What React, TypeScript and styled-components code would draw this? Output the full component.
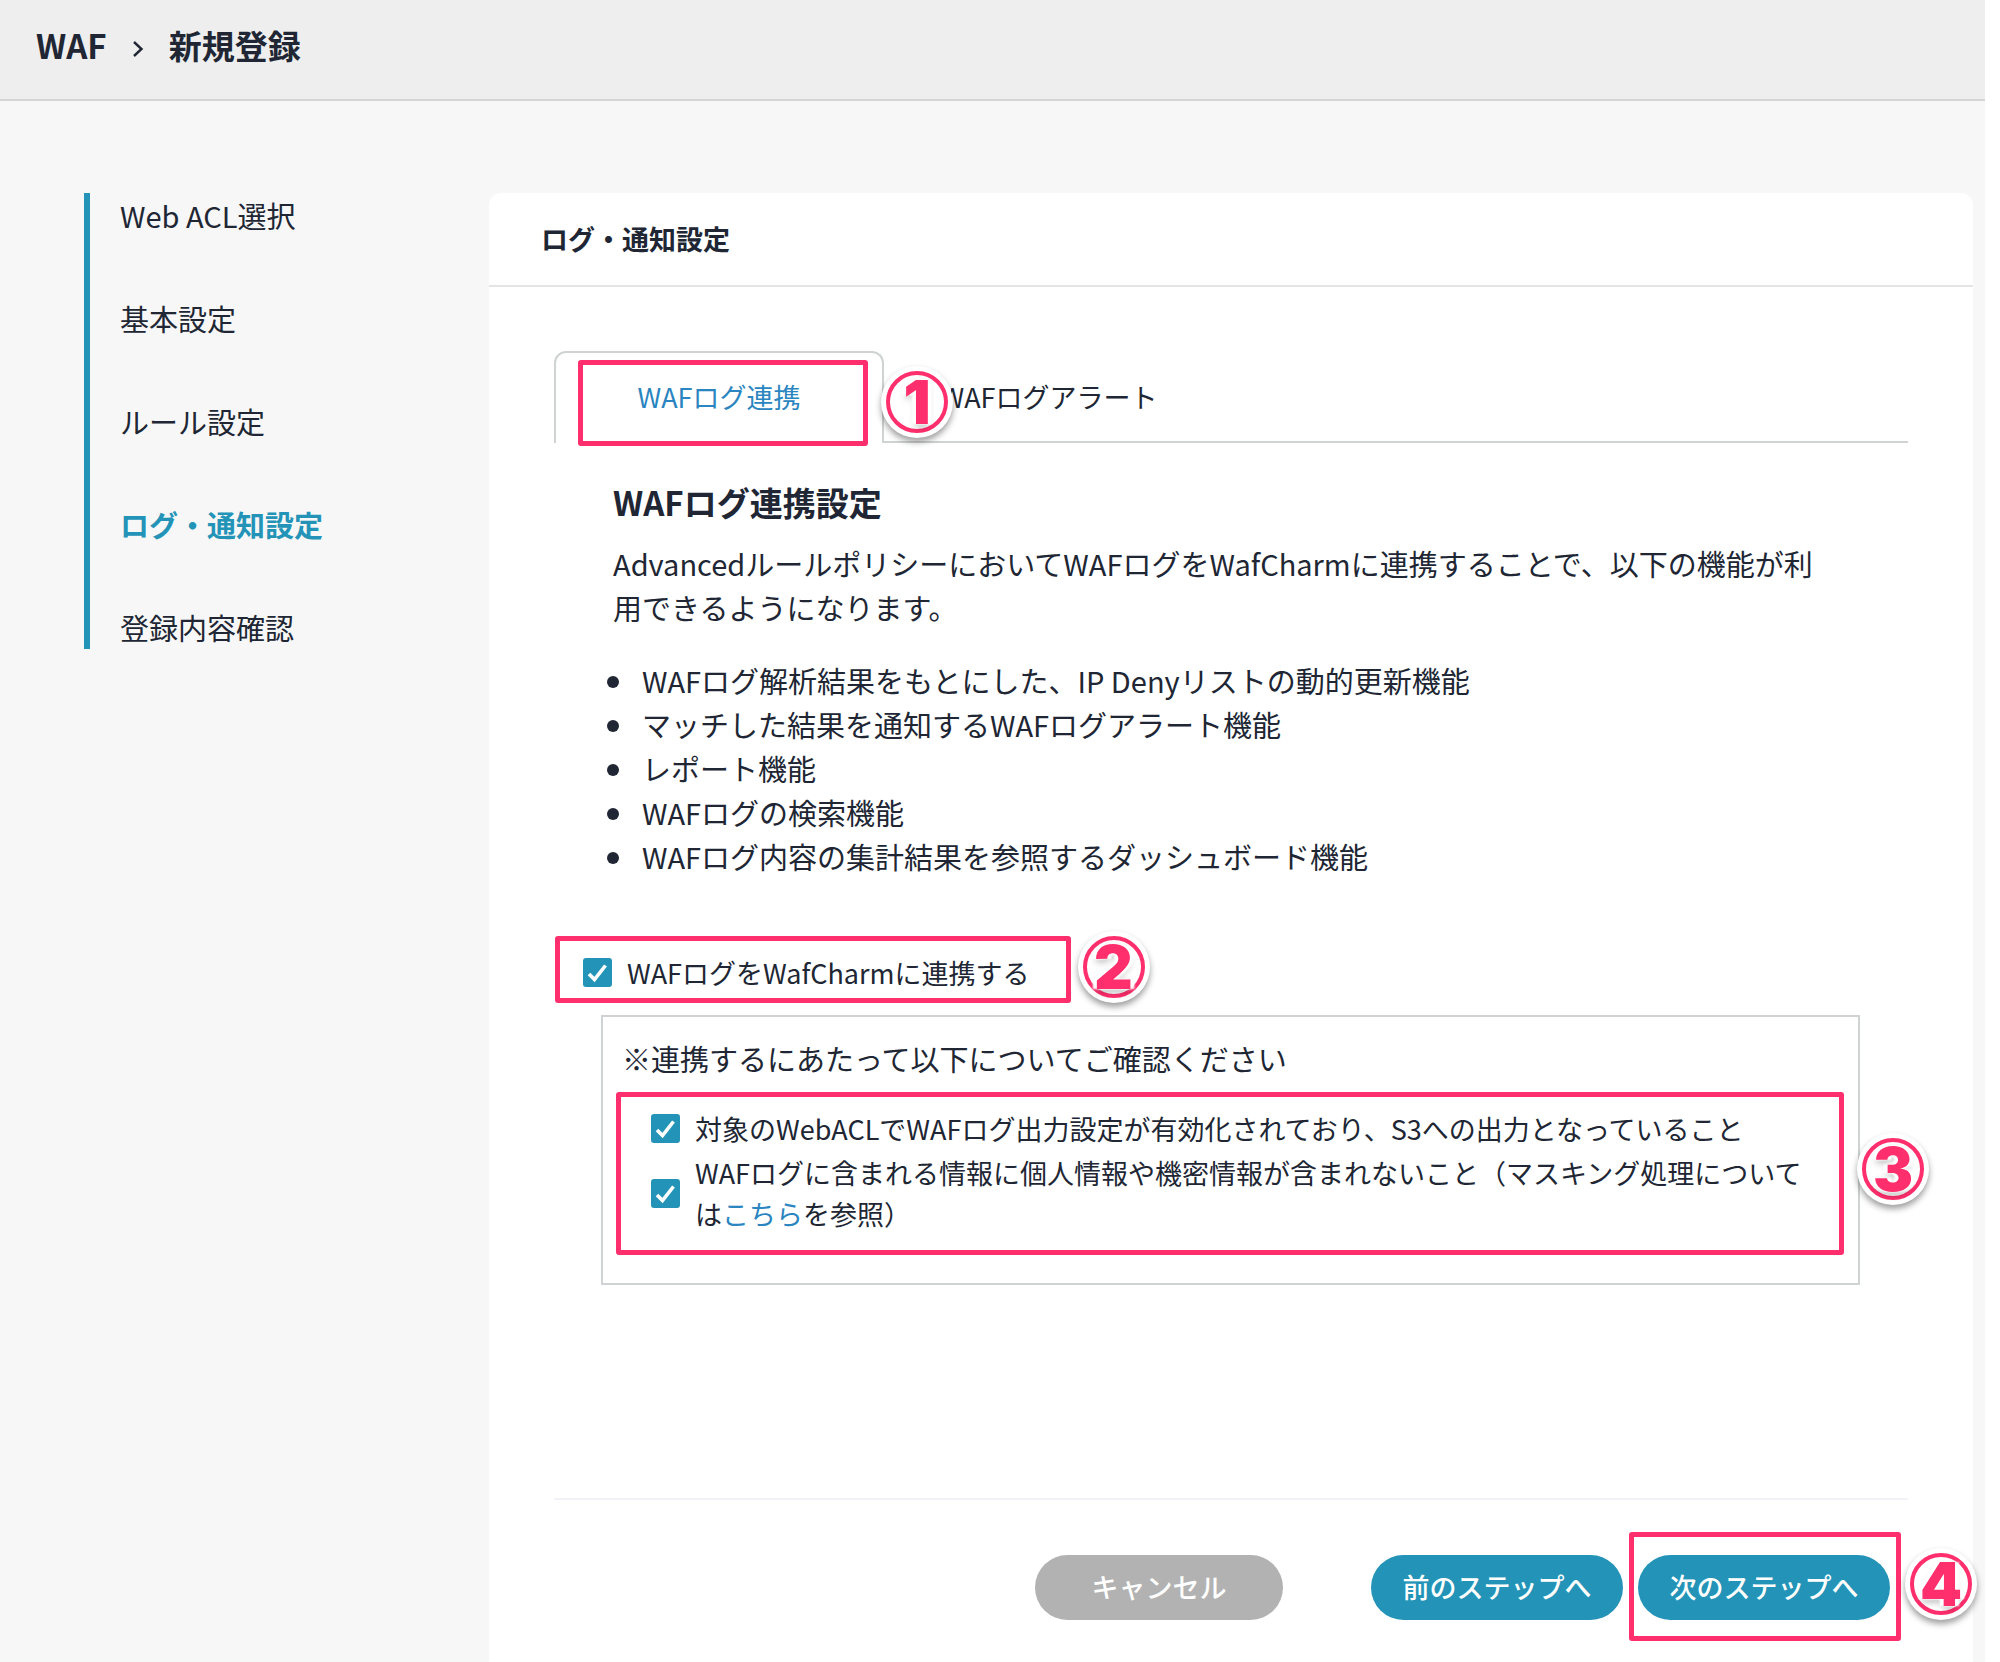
import React, { useId, useState } from "react";
import styled, { createGlobalStyle, css } from "styled-components";

const color = {
  ink: "#202633",
  teal: "#2394b8",
  link: "#2a85c0",
  mark: "#ff2e6c",
  line: "#d0d3d3",
  page: "#f7f7f7",
};

const GlobalStyle = createGlobalStyle`
  *, *::before, *::after { box-sizing: border-box; }
  body {
    margin: 0;
    background: #fff;
    color: ${color.ink};
    font-family: "Noto Sans CJK JP", "Noto Sans", sans-serif;
    font-size: 29px;
    line-height: 44px;
  }
  h1, h2, h3, p, ul, ol { margin: 0; padding: 0; }
  button, input { font: inherit; color: inherit; }
  a { text-decoration: none; }
`;

const Page = styled.div`
  display: flex;
  flex-direction: column;
  min-height: 100vh;
  margin-right: 15px;
  background: ${color.page};
`;

const TopBar = styled.header`
  display: flex;
  align-items: center;
  height: 101px;
  padding: 0 36px 10px;
  background: #eeeeee;
  border-bottom: 2px solid #d3d6d5;
  font-size: 33px;
  font-weight: 700;
`;

const Crumbs = styled.nav`
  display: flex;
  align-items: center;
  gap: 25px;
`;

const CrumbLink = styled.a`
  color: inherit;
`;

const CrumbArrow = styled.svg`
  width: 12px;
  height: 18px;
  margin-top: 8px;
`;

const CrumbTitle = styled.h1`
  font-size: inherit;
  font-weight: inherit;
`;

const Body = styled.div`
  display: grid;
  grid-template-columns: 405px minmax(0, 1fr);
  align-items: stretch;
  flex: 1;
  padding: 92px 12px 0 84px;
`;

const Steps = styled.ol`
  display: flex;
  flex-direction: column;
  gap: 59px;
  align-self: start;
  padding-left: 30px;
  border-left: 6px solid ${color.teal};
  list-style: none;
`;

const Step = styled.li<{ $current?: boolean }>`
  ${(p) =>
    p.$current &&
    css`
      color: ${color.teal};
      font-weight: 700;
    `}
`;

const Panel = styled.main`
  display: flex;
  flex-direction: column;
  background: #fff;
  border-radius: 12px 12px 0 0;
`;

const PanelHead = styled.div`
  padding: 24px 52px;
  border-bottom: 2px solid #e3e5e5;
`;

const PanelTitle = styled.h2`
  font-size: 27px;
  font-weight: 700;
`;

const PanelBody = styled.div`
  display: flex;
  flex-direction: column;
  flex: 1;
  padding: 64px 65px 42px;
`;

const Tabs = styled.div`
  display: flex;
`;

const TabCell = styled.div`
  position: relative;
  display: flex;
`;

const Tab = styled.button<{ $active?: boolean }>`
  min-width: 330px;
  height: 92px;
  padding: 2px 0 0;
  background: none;
  font-size: 27px;
  cursor: pointer;
  border: 0 solid ${color.line};
  border-bottom-width: 2px;
  ${(p) =>
    p.$active &&
    css`
      padding: 0 0 2px;
      color: ${color.link};
      border-width: 2px 2px 0;
      border-radius: 12px 12px 0 0;
    `}
`;

const TabFill = styled.div`
  flex: 1;
  border-bottom: 2px solid ${color.line};
`;

const Intro = styled.section`
  padding: 37px 72px 0 59px;
`;

const SectionTitle = styled.h3`
  margin-bottom: 17px;
  font-size: 33px;
  font-weight: 700;
`;

const Features = styled.ul`
  margin: 29px 0 0 -6px;
  list-style: none;
`;

const Feature = styled.li`
  display: flex;
  align-items: center;
  gap: 23px;
  &::before {
    content: "";
    flex: none;
    width: 12px;
    height: 12px;
    margin-top: 4px;
    border-radius: 50%;
    background: ${color.ink};
  }
`;

const ConsentRow = styled.div`
  position: relative;
  align-self: flex-start;
  display: flex;
  margin-top: 57px;
  padding: 17px 36px 10px 29px;
`;

const CheckLabel = styled.label`
  display: flex;
  align-items: center;
  gap: 15px;
  font-size: 27px;
  line-height: 41px;
`;

const TickBox = styled.span`
  display: grid;
  flex: none;
  width: 29px;
  height: 29px;
  & > * {
    grid-area: 1 / 1;
  }
`;

const TickInput = styled.input`
  appearance: none;
  width: 29px;
  height: 29px;
  margin: 0;
  background: #fff;
  border: 2px solid #b5b8ba;
  border-radius: 3px;
  cursor: pointer;
  &:checked {
    background: ${color.teal};
    border-color: ${color.teal};
  }
`;

const TickMark = styled.svg`
  width: 29px;
  height: 29px;
  pointer-events: none;
`;

const NoteBox = styled.section`
  margin: 12px 48px 0 47px;
  padding: 19px 14px 28px 13px;
  border: 2px solid ${color.line};
`;

const NoteText = styled.p`
  padding-left: 6px;
`;

const Conditions = styled.ul`
  position: relative;
  display: flex;
  flex-direction: column;
  gap: 3px;
  margin-top: 12px;
  padding: 16px 34px 21px 35px;
  list-style: none;
`;

const InlineLink = styled.a`
  color: ${color.link};
`;

const Footer = styled.footer`
  display: flex;
  align-items: center;
  justify-content: flex-end;
  margin-top: auto;
  padding: 55px 18px 0;
  border-top: 2px solid #f1f3f9;
`;

const Pill = styled.button<{ $muted?: boolean }>`
  width: ${(p) => (p.$muted ? "248px" : "252px")};
  height: 65px;
  margin-right: ${(p) => (p.$muted ? "88px" : "0")};
  padding: 0 0 2px;
  border: 0;
  border-radius: 33px;
  background: ${(p) => (p.$muted ? "#b2b2b2" : color.teal)};
  color: #fff;
  font-size: 27px;
  font-weight: 500;
  cursor: pointer;
`;

const NextCell = styled.div`
  position: relative;
  display: flex;
  margin-left: 15px;
`;

const Frame = styled.div<{ $inset: string }>`
  position: absolute;
  inset: ${(p) => p.$inset};
  border: 5px solid ${color.mark};
  border-radius: 3px;
  pointer-events: none;
`;

const Badge = styled.span<{ $top: number; $right: number }>`
  position: absolute;
  z-index: 1;
  top: ${(p) => p.$top}px;
  right: ${(p) => -p.$right}px;
  display: flex;
  align-items: center;
  justify-content: center;
  width: 62px;
  height: 62px;
  border: 4px solid ${color.mark};
  border-radius: 50%;
  background: #fff;
  box-shadow: 0 0 0 5px #fff, 0 4px 6px 5px rgba(0, 0, 0, 0.38);
  color: ${color.mark};
  font-family: Inter, sans-serif;
  font-size: 60px;
  font-weight: 900;
  line-height: 54px;
  text-shadow: 0 0 3px #fff, 4px 0 2px #fff, -4px 0 2px #fff,
    0 3px 7px rgba(0, 0, 0, 0.3);
  pointer-events: none;
`;

function Check({ children }: { children: React.ReactNode }) {
  const id = useId();
  const [on, setOn] = useState(true);
  return (
    <CheckLabel htmlFor={id}>
      <TickBox>
        <TickInput id={id} type="checkbox" checked={on} onChange={(e) => setOn(e.target.checked)} />
        {on && (
          <TickMark viewBox="0 0 29 29" aria-hidden="true">
            <path d="M6 16 L11.5 21.5 L22.5 7.5" fill="none" stroke="#fff" strokeWidth="3.6" />
          </TickMark>
        )}
      </TickBox>
      <span>{children}</span>
    </CheckLabel>
  );
}

const steps = ["Web ACL選択", "基本設定", "ルール設定", "ログ・通知設定", "登録内容確認"];

const features = [
  "WAFログ解析結果をもとにした、IP Denyリストの動的更新機能",
  "マッチした結果を通知するWAFログアラート機能",
  "レポート機能",
  "WAFログの検索機能",
  "WAFログ内容の集計結果を参照するダッシュボード機能",
];

export default function App() {
  return (
    <Page lang="ja">
      <GlobalStyle />
      <TopBar>
        <Crumbs>
          <CrumbLink href="#waf">WAF</CrumbLink>
          <CrumbArrow viewBox="0 0 12 18" aria-hidden="true">
            <path d="M2 2 L9.5 9 L2 16" fill="none" stroke={color.ink} strokeWidth="2.4" />
          </CrumbArrow>
          <CrumbTitle>新規登録</CrumbTitle>
        </Crumbs>
      </TopBar>
      <Body>
        <Steps>
          {steps.map((s) => (
            <Step key={s} $current={s === "ログ・通知設定"}>
              {s}
            </Step>
          ))}
        </Steps>
        <Panel>
          <PanelHead>
            <PanelTitle>ログ・通知設定</PanelTitle>
          </PanelHead>
          <PanelBody>
            <Tabs role="tablist">
              <TabCell>
                <Tab role="tab" aria-selected="true" $active>
                  WAFログ連携
                </Tab>
                <Frame $inset="9px 16px -3px 24px" />
                <Badge $top={20} $right={64}>1</Badge>
              </TabCell>
              <Tab role="tab" aria-selected="false">
                WAFログアラート
              </Tab>
              <TabFill />
            </Tabs>
            <Intro>
              <SectionTitle>WAFログ連携設定</SectionTitle>
              <p>
                AdvancedルールポリシーにおいてWAFログをWafCharmに連携することで、以下の機能が利用できるようになります。
              </p>
              <Features>
                {features.map((f) => (
                  <Feature key={f}>{f}</Feature>
                ))}
              </Features>
            </Intro>
            <ConsentRow>
              <Check>WAFログをWafCharmに連携する</Check>
              <Frame $inset="1px -5px 0 1px" />
              <Badge $top={1} $right={79}>2</Badge>
            </ConsentRow>
            <NoteBox>
              <NoteText>※連携するにあたって以下についてご確認ください</NoteText>
              <Conditions>
                <li>
                  <Check>対象のWebACLでWAFログ出力設定が有効化されており、S3への出力となっていること</Check>
                </li>
                <li>
                  <Check>
                    WAFログに含まれる情報に個人情報や機密情報が含まれないこと（マスキング処理については
                    <InlineLink href="#masking">こちら</InlineLink>を参照）
                  </Check>
                </li>
                <Frame as="li" aria-hidden="true" $inset="0" />
                <Badge as="li" $top={46} $right={80}>
                  3
                </Badge>
              </Conditions>
            </NoteBox>
            <Footer>
              <Pill type="button" $muted>
                キャンセル
              </Pill>
              <Pill type="button">前のステップへ</Pill>
              <NextCell>
                <Pill type="button">次のステップへ</Pill>
                <Frame $inset="-23px -11px -21px -9px" />
                <Badge $top={-2} $right={82}>4</Badge>
              </NextCell>
            </Footer>
          </PanelBody>
        </Panel>
      </Body>
    </Page>
  );
}
